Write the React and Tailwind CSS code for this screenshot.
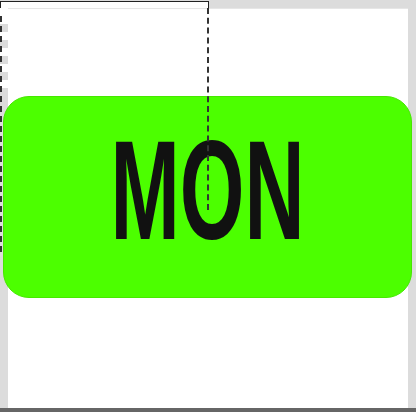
import React from 'react';

const App = () => {
    return (
        <div className="relative w-[416px] h-[412px] overflow-hidden bg-[#dcdcdc] flex flex-col">
            {/* top ruler */}
            <div className="h-2 flex">
                <div className="w-[209px] mt-px h-[8px] bg-white border border-[#222]"></div>
            </div>

            {/* canvas */}
            <div className="flex-1 flex">
                <div className="w-2 flex flex-col">
                    <div className="h-2 bg-white"></div>
                    <div className="h-[80px] bg-[repeating-linear-gradient(to_bottom,#ffffff_0px,#ffffff_8px,#dcdcdc_8px,#dcdcdc_16px)]"></div>
                </div>
                <div className="flex-1 bg-white border-t border-[#e6e6e6]"></div>
                <div className="w-2 bg-[#dcdcdc]"></div>
            </div>

            <div className="h-1 bg-[#666666]"></div>

            {/* left guide */}
            <div className="absolute left-0 top-[16px] h-[236px] border-l-2 border-dashed border-[#333]"></div>

            {/* selected element */}
            <div className="absolute left-[3px] top-[96px] w-[409px] h-[202px] rounded-[26px] bg-[#4cff00] border border-[#46e800] flex items-center justify-center">
                <span
                    className="block -mt-[13px] scale-x-[0.59] text-[#111] font-bold leading-none text-[141px] blur-[0.5px]"
                    style={{ fontFamily: '"Liberation Sans", Arial, sans-serif' }}
                >
                    MON
                </span>
            </div>

            {/* center guide */}
            <div className="absolute left-[207px] top-[8px] h-[202px] border-l-2 border-dashed border-[#333]"></div>
        </div>
    );
};

export default App;
